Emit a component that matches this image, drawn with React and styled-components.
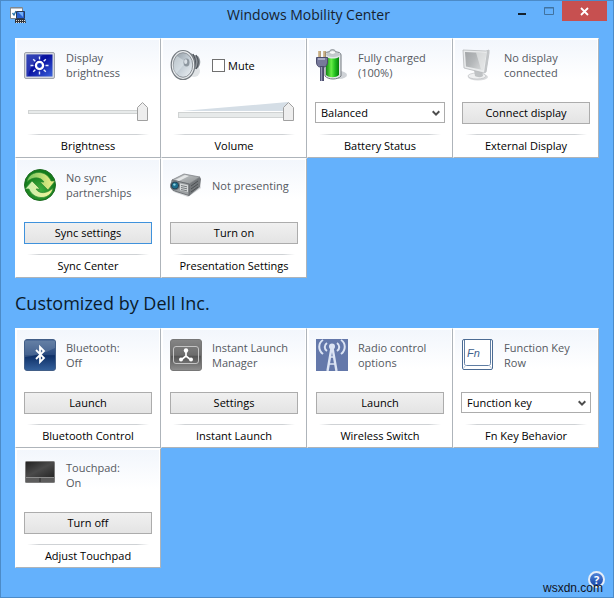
import React, { useState } from "react";
import styled, { createGlobalStyle, css } from "styled-components";

const GlobalStyle = createGlobalStyle`
  * {
    box-sizing: border-box;
  }
  body {
    margin: 0;
    font-family: "Open Sans", "Noto Sans", sans-serif;
    font-size: 11px;
    line-height: 15px;
    color: #000;
  }
  button, select, input {
    font: inherit;
    color: inherit;
    margin: 0;
  }
`;

const Window = styled.div`
  position: relative;
  display: flex;
  flex-direction: column;
  min-height: 100vh;
  background: #64b1fc;
  border: 1px solid #4c8bc8;
`;

const TitleBar = styled.header`
  display: grid;
  grid-template-columns: 1fr auto 1fr;
  align-items: start;
  height: 37px;
  padding: 0 6px 0 9px;
`;

const AppIcon = styled.svg`
  display: block;
  width: 16px;
  height: 16px;
  margin-top: 6px;
`;

const WindowTitle = styled.h1`
  margin: 4px 0 0;
  font-size: 14px;
  font-weight: 400;
  line-height: 20px;
  color: #17222e;
`;

const WindowButtons = styled.div`
  display: flex;
  justify-content: flex-end;
`;

const WindowButton = styled.button`
  display: flex;
  justify-content: center;
  width: ${(p) => (p.$close ? 45 : 27)}px;
  height: 20px;
  padding: 0;
  border: 0;
  background: ${(p) => (p.$close ? "#c75050" : "transparent")};
`;

const Content = styled.main`
  flex: 1;
  padding: 0 14px;
`;

const Grid = styled.div`
  display: grid;
  grid-template-columns: repeat(4, 1fr);
  grid-auto-rows: 120px;
`;

const Heading = styled.h2`
  margin: 0;
  padding: 10px 0;
  font-size: 18px;
  font-weight: 400;
  line-height: 30px;
  color: #0b1a2b;
`;

const TileBox = styled.section`
  display: flex;
  flex-direction: column;
  background: linear-gradient(#f2f6fc, #fff 40px);
  border: 1px solid #fff;
  border-right-color: #aeb4ba;
  border-bottom-color: #aeb4ba;
  box-shadow: inset -1px -1px #fff, inset 1px 1px #fff;
`;

const Status = styled.div`
  display: flex;
  align-items: center;
  gap: 10px;
  height: 34px;
  margin: 9px 0 0 8px;
  color: #55595f;
`;

const Art = styled.svg`
  flex: none;
  width: 32px;
  height: 32px;
`;

const StatusText = styled.div`
  white-space: pre-line;
`;

const Control = styled.div`
  display: flex;
  align-items: flex-start;
  height: 32px;
  margin-top: 20px;
  padding: 0 ${(p) => (p.$wide ? 7 : 8)}px;
`;

const Caption = styled.h3`
  margin: 0;
  font-size: 11px;
  font-weight: 400;
  line-height: 22px;
  text-align: center;

  &::before {
    content: "";
    display: block;
    height: 1px;
    margin: 0 11px;
    background: linear-gradient(90deg, transparent, #cfd2d5 10%, #cfd2d5 90%, transparent);
  }
`;

const PushButton = styled.button`
  width: 100%;
  height: 22px;
  padding: 0;
  line-height: 20px;
  border: 1px solid ${(p) => (p.$focused ? "#3f92dc" : "#acacac")};
  background: linear-gradient(#f0f0f0, #e4e4e4);
`;

const SelectWrap = styled.div`
  position: relative;
  width: 100%;

  svg {
    position: absolute;
    right: 5px;
    top: 8px;
    pointer-events: none;
  }
`;

const Select = styled.select`
  display: block;
  appearance: none;
  width: 100%;
  height: 21px;
  padding: 0 18px 0 5px;
  border: 1px solid #acacac;
  border-radius: 0;
  background: #fff;
`;

const CheckLabel = styled.label`
  display: flex;
  align-items: center;
  gap: 3px;
  color: #000;
`;

const CheckBox = styled.input`
  appearance: none;
  width: 13px;
  height: 13px;
  border: 1px solid #707070;
  background: #fff;

  &:checked {
    background: #707070;
    box-shadow: inset 0 0 0 2px #fff;
  }
`;

const SliderWrap = styled.div`
  position: relative;
  flex: 1;
  margin: 0 4px 0 ${(p) => (p.$wedge ? 8 : 4)}px;
`;

const Wedge = styled.svg`
  position: absolute;
  left: 0;
  top: 0;
  width: 100%;
  height: 9px;
`;

const thumb = css`
  appearance: none;
  width: 11px;
  height: 19px;
  border: 0;
  background: url("data:image/svg+xml,%3Csvg xmlns='http://www.w3.org/2000/svg' width='11' height='19'%3E%3Cpath d='M.5 18.5V5.5L5.5.5l5 5v13z' fill='%23eeeeee' stroke='%23a0a0a0'/%3E%3C/svg%3E") no-repeat;
`;

const Range = styled.input`
  position: relative;
  display: block;
  appearance: none;
  width: 100%;
  height: 19px;
  background: transparent;

  &::-webkit-slider-runnable-track {
    height: 19px;
    background:
      linear-gradient(#e7eaea, #e7eaea) 1px ${(p) => (p.$wedge ? 11 : 9)}px / calc(100% - 2px) ${(p) => (p.$wedge ? 4 : 2)}px no-repeat,
      linear-gradient(#d0d3d3, #d0d3d3) 0 ${(p) => (p.$wedge ? 10 : 8)}px / 100% ${(p) => (p.$wedge ? 6 : 4)}px no-repeat;
  }
  &::-webkit-slider-thumb {
    ${thumb}
  }
`;

const HelpButton = styled.button`
  position: absolute;
  right: 8px;
  bottom: 9px;
  width: 17px;
  height: 17px;
  padding: 0;
  border: 2px solid #e4edf8;
  border-radius: 50%;
  background: linear-gradient(#4f83d8, #1746a8);
  color: #fff;
  font-size: 11px;
  font-weight: 700;
  line-height: 13px;
`;

const Watermark = styled.div`
  position: absolute;
  right: 10px;
  bottom: 1px;
  font-family: "Liberation Sans", Arial, sans-serif;
  font-size: 12px;
  color: #10131c;
  pointer-events: none;
`;

const Chevron = () => (
  <svg width="8" height="7" viewBox="0 0 8 7" aria-hidden="true">
    <path d="M.7 1.2 4 4.6 7.3 1.2" fill="none" stroke="#4d4d4d" strokeWidth="2" />
  </svg>
);

const BrightnessIcon = () => (
  <Art viewBox="0 0 32 32" aria-hidden="true">
    <defs>
      <linearGradient id="bright" x2="1" y2="1">
        <stop offset="0" stopColor="#1c2fa8" />
        <stop offset=".45" stopColor="#0710a0" />
        <stop offset="1" stopColor="#3b63dc" />
      </linearGradient>
    </defs>
    <rect x=".5" y="3.500" width="30" height="26" rx="1.500" fill="#d5d8dd" stroke="#a0a4ad" />
    <rect x="2.500" y="5.500" width="26" height="22" fill="url(#bright)" />
    <path d="M2.500 5.500h17C12 11 6 17 4 27.500H2.500z" fill="#6276d3" opacity=".35" />
    <circle cx="15.500" cy="16.500" r="3.600" fill="#1434b8" stroke="#fff" strokeWidth="2.300" />
    <path
      d="M15.500 7.500v3M15.500 22.500v3M6.500 16.500h3M21.500 16.500h3M9.200 10.200l2.100 2.100M19.700 20.700l2.100 2.100M9.200 22.800l2.100-2.100M19.700 12.300l2.100-2.100"
      stroke="#e8f0ff"
      strokeWidth="1.400"
    />
  </Art>
);

const SpeakerIcon = () => (
  <Art viewBox="0 0 32 32" aria-hidden="true">
    <defs>
      <linearGradient id="cone" x2="1" y2="1">
        <stop offset="0" stopColor="#8c969e" />
        <stop offset=".5" stopColor="#c3cdd5" />
        <stop offset="1" stopColor="#eff3f6" />
      </linearGradient>
    </defs>
    <ellipse cx="24" cy="22" rx="6" ry="6" fill="#c9cdd2" opacity=".55" />
    <path d="M16 3c4 0 6 2 8 3l4 1c3 4 3 8 0 12l-5 2-6 6z" fill="#8c9299" />
    <path d="M23 5c3 5 3 11 0 16M26 6c3 5 3 10 0 14" fill="none" stroke="#4d5359" strokeWidth="1.200" />
    <path d="M19 4c4 6 4 13 0 20" fill="none" stroke="#d9dde0" strokeWidth="2" />
    <ellipse cx="13" cy="16" rx="11.800" ry="14.500" fill="#e9ecee" stroke="#767c82" strokeWidth="1.200" />
    <ellipse cx="13" cy="16" rx="9.700" ry="12.300" fill="url(#cone)" stroke="#8c9298" />
    <path d="m16 13-9-6c-4 5-5 13-1 18z" fill="#e4ebf0" opacity=".5" />
    <ellipse cx="16.500" cy="13.500" rx="3" ry="4" fill="#8d979f" />
    <ellipse cx="15.700" cy="12.700" rx="1.600" ry="2.400" fill="#d9e0e6" />
  </Art>
);

const BatteryIcon = () => (
  <Art viewBox="0 0 32 32" aria-hidden="true">
    <defs>
      <linearGradient id="cell">
        <stop offset="0" stopColor="#138615" />
        <stop offset=".4" stopColor="#68ee47" />
        <stop offset=".7" stopColor="#20bd1e" />
        <stop offset="1" stopColor="#087d0c" />
      </linearGradient>
    </defs>
    <ellipse cx="23" cy="26" rx="8" ry="4" fill="#b7bcc2" opacity=".65" />
    <path d="M9 5c0-2 3-2 4-2 1-3 6-3 7 0 3 0 5 1 5 3v21c-3 4-13 4-16 0z" fill="#e2e6e8" stroke="#72797f" />
    <path d="M10 8c4 2 10 2 13 0v18c-3 3-10 3-13 0z" fill="url(#cell)" />
    <ellipse cx="17" cy="5.500" rx="7" ry="2.500" fill="#c4c9cd" />
    <ellipse cx="16.500" cy="3.500" rx="3" ry="1.800" fill="#fafafa" stroke="#a3a8ac" strokeWidth=".5" />
    <path d="M3.500 2v7M8.500 2v7" stroke="#a08257" strokeWidth="2.500" />
    <path d="M3 2v6M8 2v6" stroke="#ecd8b0" />
    <path d="M.5 8.500h11V13c0 3-2 5-3.500 5H4c-2 0-3.500-2-3.500-5z" fill="#77799b" stroke="#4b4c6c" />
    <path d="M2 10h7" stroke="#b9bbd2" strokeWidth="1.500" />
    <path d="M6 17v15" stroke="#4b4c6c" strokeWidth="4" />
    <path d="M5.500 18v14" stroke="#9698b6" strokeWidth="1.400" />
  </Art>
);

const MonitorIcon = () => (
  <Art viewBox="0 0 32 32" aria-hidden="true">
    <defs>
      <linearGradient id="screen" x2="1" y2=".6">
        <stop offset="0" stopColor="#a2a5a7" />
        <stop offset=".5" stopColor="#b4b7b9" />
        <stop offset="1" stopColor="#d5d7d8" />
      </linearGradient>
    </defs>
    <ellipse cx="16" cy="28" rx="10" ry="3.500" fill="#d8dadc" />
    <ellipse cx="15" cy="27" rx="9" ry="3" fill="#eff0f1" stroke="#b8bbbd" strokeWidth=".6" />
    <path d="m12 21 8 1 1 5c-3 2-6 1-8 0z" fill="#bfc2c4" />
    <path d="m1 1 23 1 3-1 0 3-3 19-2 1L2 19z" fill="#e9ebec" stroke="#b5b8ba" strokeWidth=".8" />
    <path d="m3 3 21 1-3 17L4 17.500z" fill="url(#screen)" />
    <path d="m14 3.500 10 .5-3 17-2-.4z" fill="#eceeef" opacity=".6" />
    <path d="m25 2 2-1v3l-3 19-2 1z" fill="#c2c5c7" />
  </Art>
);

const SyncIcon = () => (
  <Art viewBox="0 0 32 32" aria-hidden="true">
    <defs>
      <radialGradient id="sync" cy=".65">
        <stop offset="0" stopColor="#3fae3d" />
        <stop offset="1" stopColor="#137c1b" />
      </radialGradient>
      <linearGradient id="arrow-right" x2="1">
        <stop offset="0" stopColor="#74c65c" />
        <stop offset="1" stopColor="#f6f08a" />
      </linearGradient>
      <linearGradient id="arrow-left" x2="1">
        <stop offset="0" stopColor="#c6eeb0" />
        <stop offset="1" stopColor="#f4f394" />
      </linearGradient>
    </defs>
    <circle cx="16" cy="16" r="15.500" fill="url(#sync)" stroke="#206b22" />
    <path d="M3 13C4 5 13 1 21 5c3 2 5 4 6 7h4l-7 9-8-8h4c-3-5-11-6-17 0z" fill="url(#arrow-right)" stroke="#2f8a30" strokeWidth=".7" />
    <path d="M29 19c-1 8-10 12-18 8-3-2-5-4-6-7H1l7-8 8 8h-4c3 5 11 5 17-1z" fill="url(#arrow-left)" stroke="#2f8a30" strokeWidth=".7" />
  </Art>
);

const ProjectorIcon = () => (
  <Art viewBox="0 0 32 32" aria-hidden="true">
    <defs>
      <linearGradient id="case" x2="1" y2="1">
        <stop offset="0" stopColor="#c9cccd" />
        <stop offset="1" stopColor="#8d9193" />
      </linearGradient>
    </defs>
    <path d="M4 23 18 28l13-9-1-3z" fill="#babec1" opacity=".6" />
    <path d="M2 11 14 5l16 3-11 7z" fill="url(#case)" stroke="#75797c" strokeWidth=".7" />
    <path d="m5 11 10-5 4 1-10 5z" fill="#e4e6e7" />
    <path d="m19 15 11-7 1 2-1 8-11 9z" fill="#74787b" />
    <path d="m2 11 17 4v11.500L3 21.500 1 19z" fill="#9da1a3" stroke="#5d6164" strokeWidth=".8" />
    <path d="m10 14.500 8 1.700v6.800l-8-1.800z" fill="#d6d9da" />
    <path d="m11 16.500 6 1.300M11 18.500l6 1.300M11 20.500l6 1.300" stroke="#6a6e71" strokeWidth=".9" />
    <path d="m21 17 7-5M21 20l7-5M21 23l7-5" stroke="#484c4f" strokeWidth=".9" />
    <circle cx="5" cy="16.500" r="4.500" fill="#293f4d" stroke="#81898f" />
    <circle cx="5" cy="16.500" r="3" fill="#1b6d8c" />
    <circle cx="4.400" cy="15.600" r="1.200" fill="#8fd3e2" />
  </Art>
);

const BluetoothIcon = () => (
  <Art viewBox="0 0 32 32" aria-hidden="true">
    <defs>
      <linearGradient id="bt" x2="0" y2="1">
        <stop offset="0" stopColor="#526f9a" />
        <stop offset=".5" stopColor="#26477d" />
        <stop offset=".52" stopColor="#0e2f66" />
        <stop offset="1" stopColor="#35619c" />
      </linearGradient>
    </defs>
    <rect x=".5" y=".5" width="31" height="31" rx="2.500" fill="url(#bt)" stroke="#425e87" />
    <path d="M1 18C10 17 21 14 31 9V2H1z" fill="#a5b6cc" opacity=".25" />
    <path d="m12 11 8 8-4 4V8l4 4-8 8" fill="none" stroke="#fff" strokeWidth="1.800" />
  </Art>
);

const LaunchIcon = () => (
  <Art viewBox="0 0 32 32" aria-hidden="true">
    <defs>
      <linearGradient id="launch" x2="0" y2="1">
        <stop offset="0" stopColor="#858585" />
        <stop offset=".5" stopColor="#6c6c6c" />
        <stop offset=".55" stopColor="#555" />
        <stop offset="1" stopColor="#8f8f8f" />
      </linearGradient>
    </defs>
    <rect x=".5" y=".5" width="31" height="31" rx="2.500" fill="url(#launch)" stroke="#777" />
    <rect x="3.500" y="7.500" width="25" height="17" rx="2.500" fill="none" stroke="#c4c4c4" />
    <path d="M16 12v5l-5 4M16 17l5 4" fill="none" stroke="#fff" strokeWidth="1.700" />
    <circle cx="16" cy="11.500" r="2.200" fill="#fff" />
    <circle cx="11" cy="20.500" r="2" fill="#fff" />
    <circle cx="21" cy="20.500" r="2" fill="#fff" />
  </Art>
);

const RadioIcon = () => (
  <Art viewBox="0 0 32 32" aria-hidden="true">
    <path d="M0 0h32v32H0z" fill="#6478aa" />
    <g fill="none" stroke="#dce4f4">
      <path d="M11 4c-3 2-3 6 0 8M21 4c3 2 3 6 0 8" strokeWidth="2" />
      <path d="M7 1C2 4 2 11 7 15M25 1c5 3 5 10 0 14" strokeWidth="2" />
      <path d="m15.500 9-4 23M16.500 9l4 23" strokeWidth="2.400" />
      <path d="M14 18h4M12.500 25h7" strokeWidth="1.600" />
    </g>
    <circle cx="16" cy="7.500" r="3" fill="#dce4f4" />
  </Art>
);

const FnIcon = () => (
  <Art viewBox="0 0 32 32" aria-hidden="true">
    <rect x=".5" y=".5" width="30" height="30" rx="1.500" fill="#fff" stroke="#4b6b93" />
    <path d="M2.500 1v23.500c0 1.500 1 2 2 2h22c1 0 2-.5 2-2V1" fill="none" stroke="#5f7da3" />
    <path d="m1 30 2.500-3.500M30 30l-2.500-3.500" stroke="#b6c5d8" />
    <text x="5" y="18" fill="#3f618d" fontFamily="Liberation Sans, sans-serif" fontSize="11" fontStyle="italic">
      Fn
    </text>
  </Art>
);

const TouchpadIcon = () => (
  <Art viewBox="0 0 32 32" aria-hidden="true">
    <defs>
      <linearGradient id="pad" x2="1" y2="1">
        <stop offset="0" stopColor="#232323" />
        <stop offset=".5" stopColor="#4a4a4a" />
        <stop offset="1" stopColor="#262626" />
      </linearGradient>
    </defs>
    <rect x="1" y="2" width="30" height="22" rx="1.500" fill="#7b7b7b" />
    <path d="M2 3h28v15H2z" fill="url(#pad)" />
    <path d="M2 18.500h28" stroke="#8c8c8c" />
    <path d="M2 19h28v4H2z" fill="#5c5c5c" />
    <path d="M16 19v4" stroke="#292929" />
  </Art>
);

const Tile = ({ icon: Icon, text, caption, wide, children }) => (
  <TileBox>
    <Status>
      <Icon />
      <StatusText>{text}</StatusText>
    </Status>
    <Control $wide={wide}>{children}</Control>
    <Caption>{caption}</Caption>
  </TileBox>
);

const Slider = ({ label, wedge }) => {
  const [value, setValue] = useState(100);
  return (
    <SliderWrap $wedge={wedge}>
      {wedge && (
        <Wedge viewBox="0 0 116 9" preserveAspectRatio="none" aria-hidden="true">
          <path d="M4 9 110 0v9z" fill="#d5dee6" />
        </Wedge>
      )}
      <Range
        type="range"
        aria-label={label}
        $wedge={wedge}
        value={value}
        onChange={(e) => setValue(e.target.value)}
      />
    </SliderWrap>
  );
};

const DropDown = ({ label, options }) => (
  <SelectWrap>
    <Select aria-label={label}>
      {options.map((o) => (
        <option key={o}>{o}</option>
      ))}
    </Select>
    <Chevron />
  </SelectWrap>
);

const Mute = () => (
  <CheckLabel>
    <CheckBox type="checkbox" />
    Mute
  </CheckLabel>
);

export default function App() {
  return (
    <>
      <GlobalStyle />
      <Window>
        <TitleBar>
          <AppIcon viewBox="0 0 16 16" aria-hidden="true">
            <path d="M.5.500h12v11H.5z" fill="#fff" stroke="#7f878e" />
            <path d="M1 1.500h11" stroke="#b9c0c6" />
            <path d="m2.500 6 1.500 2 2-4" fill="none" stroke="#2874ae" strokeWidth="1.300" />
            <path d="M6.500 4.500h8v7h-8z" fill="#2860d0" stroke="#283b58" />
            <path d="m8 5 5 5V5z" fill="#73b0f6" />
            <path d="M5 12h10l1 4H5z" fill="#30343b" />
            <path d="M6 13.500h9M6 15.500h9" stroke="#d8dadd" strokeDasharray="1 1" />
          </AppIcon>
          <WindowTitle>Windows Mobility Center</WindowTitle>
          <WindowButtons>
            <WindowButton aria-label="Minimize">
              <svg width="8" height="20" aria-hidden="true">
                <path d="M0 12h8v2H0z" fill="#15222e" />
              </svg>
            </WindowButton>
            <WindowButton aria-label="Maximize">
              <svg width="10" height="20" aria-hidden="true">
                <path d="M.5 6.500h9v7h-9zM0 7h10" fill="none" stroke="#41729f" />
              </svg>
            </WindowButton>
            <WindowButton $close aria-label="Close">
              <svg width="9" height="20" aria-hidden="true">
                <path d="m1 7 7 7M8 7l-7 7" stroke="#fff" strokeWidth="1.800" />
              </svg>
            </WindowButton>
          </WindowButtons>
        </TitleBar>

        <Content>
          <Grid>
            <Tile icon={BrightnessIcon} text={"Display\nbrightness"} caption="Brightness">
              <Slider label="Display brightness" />
            </Tile>
            <Tile icon={SpeakerIcon} text={<Mute />} caption="Volume">
              <Slider label="Volume" wedge />
            </Tile>
            <Tile icon={BatteryIcon} text={"Fully charged\n(100%)"} caption="Battery Status" wide>
              <DropDown label="Power plan" options={["Balanced"]} />
            </Tile>
            <Tile icon={MonitorIcon} text={"No display\nconnected"} caption="External Display">
              <PushButton>Connect display</PushButton>
            </Tile>
            <Tile icon={SyncIcon} text={"No sync\npartnerships"} caption="Sync Center">
              <PushButton $focused>Sync settings</PushButton>
            </Tile>
            <Tile icon={ProjectorIcon} text="Not presenting" caption="Presentation Settings">
              <PushButton>Turn on</PushButton>
            </Tile>
          </Grid>

          <Heading>Customized by Dell Inc.</Heading>

          <Grid>
            <Tile icon={BluetoothIcon} text={"Bluetooth:\nOff"} caption="Bluetooth Control">
              <PushButton>Launch</PushButton>
            </Tile>
            <Tile icon={LaunchIcon} text={"Instant Launch\nManager"} caption="Instant Launch">
              <PushButton>Settings</PushButton>
            </Tile>
            <Tile icon={RadioIcon} text={"Radio control\noptions"} caption="Wireless Switch">
              <PushButton>Launch</PushButton>
            </Tile>
            <Tile icon={FnIcon} text={"Function Key\nRow"} caption="Fn Key Behavior" wide>
              <DropDown label="Fn key behavior" options={["Function key"]} />
            </Tile>
            <Tile icon={TouchpadIcon} text={"Touchpad:\nOn"} caption="Adjust Touchpad">
              <PushButton>Turn off</PushButton>
            </Tile>
          </Grid>
        </Content>

        <HelpButton aria-label="Help">?</HelpButton>
        <Watermark>wsxdn.com</Watermark>
      </Window>
    </>
  );
}
